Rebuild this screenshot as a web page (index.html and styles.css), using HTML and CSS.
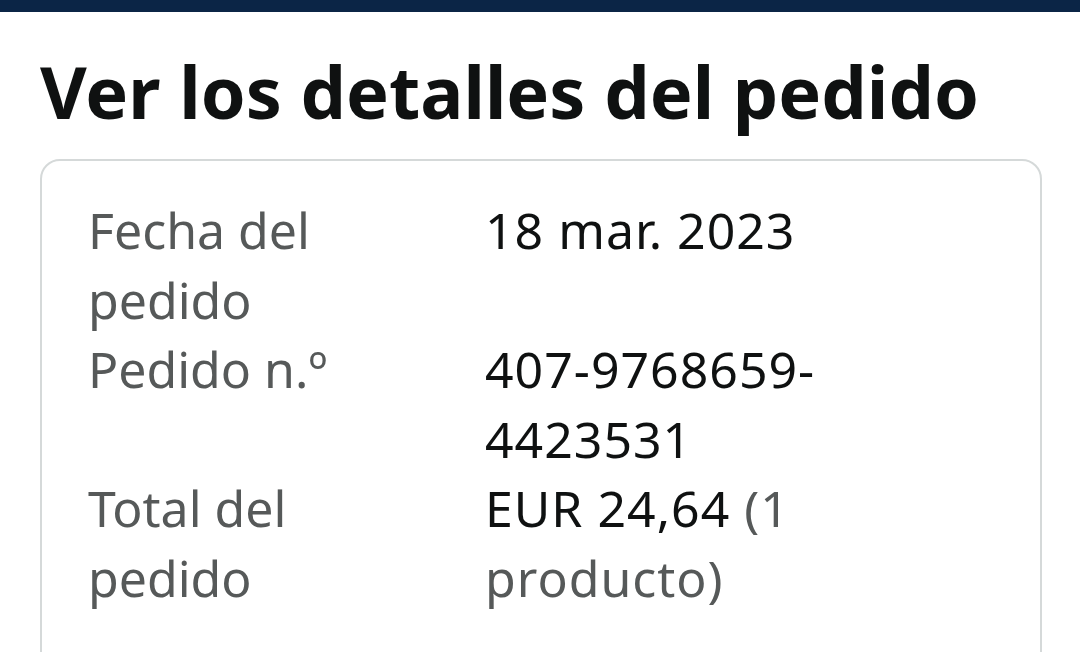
FILE: index.html
```html
<!DOCTYPE html>
<html lang="es">
<head>
<meta charset="utf-8">
<link rel="stylesheet" href="styles.css">
</head>
<body>
<div class="topbar"></div>
<main class="page">
  <h1 class="title">Ver los detalles del pedido</h1>
  <section class="card">
    <div class="grid">
      <div class="label">Fecha del pedido</div>
      <div class="value">18 mar. 2023</div>
      <div class="label">Pedido n.º</div>
      <div class="value">407-9768659-4423531</div>
      <div class="label">Total del pedido</div>
      <div class="value">EUR 24,64 <span class="muted">(1 producto)</span></div>
    </div>
  </section>
</main>
</body>
</html>
```

FILE: styles.css
```css
html, body {
  margin: 0;
  padding: 0;
  background: #ffffff;
}
body {
  font-family: "Noto Sans", "Open Sans", sans-serif;
  overflow: hidden;
  height: 652px;
}
.topbar {
  height: 12px;
  background: #0b2546;
}
.page {
  padding: 0 38px 0 40px;
}
.title {
  margin: 0;
  padding-top: 34px;
  font-size: 72px;
  line-height: 90px;
  font-weight: 700;
  color: #0f1111;
  letter-spacing: 0;
}
.card {
  margin-top: 23px;
  border: 2px solid #d5d9d9;
  border-radius: 20px;
  padding: 35px 46px 0 46px;
  height: 500px;
}
.grid {
  display: grid;
  grid-template-columns: 360px 500px;
  column-gap: 37px;
  font-size: 50px;
  line-height: 69.5px;
}
.label {
  color: #565959;
}
.value {
  color: #0f1111;
  letter-spacing: 1px;
}
.muted {
  color: #565959;
}
```
